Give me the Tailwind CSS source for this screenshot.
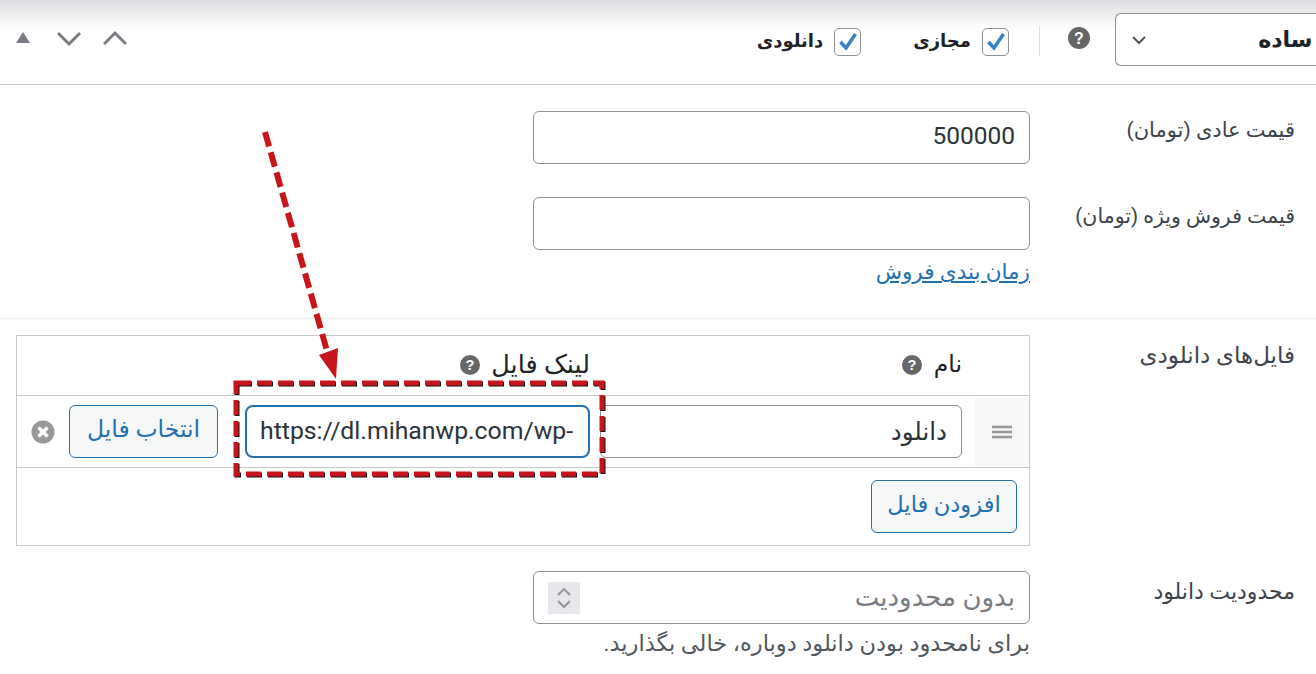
<!doctype html>
<html lang="fa" dir="rtl">
<head>
<meta charset="utf-8">
<title>محصول دانلودی</title>
<script src="https://cdn.jsdelivr.net/npm/@tailwindcss/browser@4"></script>
</head>
<body class="bg-white">
<div class="relative w-[1316px] h-[674px] overflow-hidden bg-white text-[#2c3338] font-['Roboto','DejaVu_Sans',sans-serif]">

  <!-- product type bar -->
  <div class="h-[85px] border-b border-[#c8c8c8] bg-gradient-to-b from-[#dcdde0] via-white via-35% to-white flex items-start">
    <div class="mt-[13px] w-[201px] h-[53px] shrink-0 border border-[#8c8f94] border-r-0 rounded-l-[6px] bg-white flex items-center overflow-hidden justify-between">
      <span class="text-[22px] font-bold text-[#1d2327] whitespace-nowrap mr-[-36px] [word-spacing:-3px]">نوع ساده</span>
      <svg class="ml-[14px] shrink-0" width="18" height="18" viewBox="0 0 18 18"><path d="M3 6l6 6 6-6" fill="none" stroke="#50575e" stroke-width="2"/></svg>
    </div>
    <svg class="mt-[27px] mr-[25px] shrink-0" width="22" height="22" viewBox="0 0 22 22"><circle cx="11" cy="11" r="11" fill="#666"/><text x="11" y="16.5" text-anchor="middle" font-size="16" font-weight="700" fill="#fff" font-family="Liberation Sans">?</text></svg>
    <div class="mt-[26px] mr-[28px] w-px h-[30px] bg-[#dcdcde]"></div>
    <label class="mt-[27px] mr-[30px] flex items-center gap-[11px] text-[18px] font-bold text-[#1d2327]">
      <span class="w-[27px] h-[28px] rounded-[5px] border border-[#8c8f94] bg-white flex items-center justify-center">
        <svg width="22" height="22" viewBox="0 0 22 22"><path d="M3.5 11l5.5 6 9.5-14" fill="none" stroke="#3582c4" stroke-width="3.5"/></svg>
      </span>
      <span class="mb-[3px]">مجازی</span>
    </label>
    <label class="mt-[27px] mr-[52px] flex items-center gap-[11px] text-[18px] font-bold text-[#1d2327]">
      <span class="w-[27px] h-[28px] rounded-[5px] border border-[#8c8f94] bg-white flex items-center justify-center">
        <svg width="22" height="22" viewBox="0 0 22 22"><path d="M3.5 11l5.5 6 9.5-14" fill="none" stroke="#3582c4" stroke-width="3.5"/></svg>
      </span>
      <span class="mb-[3px]">دانلودی</span>
    </label>
    <div class="mr-auto ml-[12px] mt-[26px] flex items-center gap-[22px]" dir="ltr">
      <svg width="23" height="22" viewBox="0 0 23 22"><path d="M4 16L11 5l7 11z" fill="#787c82"/></svg>
      <svg width="24" height="24" viewBox="0 0 24 24"><path d="M1 7l11 11L23 7" fill="none" stroke="#787c82" stroke-width="3"/></svg>
      <svg width="24" height="24" viewBox="0 0 24 24"><path d="M1 18L12 7l11 11" fill="none" stroke="#787c82" stroke-width="3"/></svg>
    </div>
  </div>

  <!-- pricing -->
  <div class="h-[234px] border-b border-[#eeeeee] pt-[26px]">
    <div class="flex h-[53px]">
      <div class="w-[286px] pr-[21px] pt-[4px] text-[21px] text-[#3c434a]">قیمت عادی (تومان)</div>
      <input class="w-[497px] h-[53px] border border-[#8c8f94] rounded-[6px] px-[14px] pb-[4px] text-[24.5px] text-[#2c3338] text-right" dir="ltr" value="500000">
    </div>
    <div class="flex mt-[33px]">
      <div class="w-[286px] pr-[21px] pt-[4px] text-[20.5px] text-[#3c434a]">قیمت فروش ویژه (تومان)</div>
      <div>
        <input class="block w-[497px] h-[53px] border border-[#8c8f94] rounded-[6px]">
        <a class="block mt-[6px] text-[21.5px] underline text-[#2271b1]">زمان بندی فروش</a>
      </div>
    </div>
  </div>

  <!-- downloadable files -->
  <div class="flex pt-[16px]">
    <div class="w-[286px] shrink-0 pr-[21px] pt-[4px] text-[23px] text-[#3c434a]">فایل‌های دانلودی</div>
    <div class="w-[1014px] h-[211px] border border-[#c8c8c8]">
      <div class="h-[60px] border-b border-[#c8c8c8] grid grid-cols-[54px_385px_345px_1fr] items-center text-[#1d2327] pb-[2px]">
        <div></div>
        <div class="pr-[13px] flex items-center gap-[12px] text-[23.5px]">نام
          <svg width="20" height="20" viewBox="0 0 22 22"><circle cx="11" cy="11" r="11" fill="#666"/><text x="11" y="16.5" text-anchor="middle" font-size="16" font-weight="700" fill="#fff" font-family="Liberation Sans">?</text></svg>
        </div>
        <div class="flex items-center gap-[11px] text-[25.5px]">لینک فایل
          <svg width="20" height="20" viewBox="0 0 22 22"><circle cx="11" cy="11" r="11" fill="#666"/><text x="11" y="16.5" text-anchor="middle" font-size="16" font-weight="700" fill="#fff" font-family="Liberation Sans">?</text></svg>
        </div>
      </div>
      <div class="h-[72px] border-b border-[#c8c8c8] flex items-center">
        <div class="w-[54px] h-[70px] bg-[#f7f7f7] flex items-center justify-center shrink-0">
          <svg width="22" height="16" viewBox="0 0 22 16"><path d="M1 3h20M1 8h20M1 13h20" stroke="#999" stroke-width="2.4"/></svg>
        </div>
        <input class="w-[362px] h-[53px] mr-[13px] border border-[#8c8f94] rounded-[6px] px-[14px] text-[24.5px] text-[#2c3338]" value="دانلود">
        <input class="w-[345px] h-[53px] mr-[10px] border-2 border-[#2271b1] rounded-[8px] px-[13px] pb-[3px] text-[24.8px] text-[#2c3338]" dir="ltr" value="https://dl.mihanwp.com/wp-">
        <button class="w-[149px] h-[53px] mr-[27px] border border-[#2271b1] rounded-[6px] bg-[#f6f7f7] text-[#2271b1] text-[23.5px] pb-[3px]">انتخاب فایل</button>
        <svg class="mr-[14px]" width="24" height="24" viewBox="0 0 24 24"><circle cx="12" cy="12" r="11.5" fill="#999"/><path d="M7.5 7.5l9 9M16.5 7.5l-9 9" stroke="#fff" stroke-width="3.6"/></svg>
      </div>
      <div class="pr-[12px] pt-[12px]">
        <button class="w-[146px] h-[53px] border border-[#2271b1] rounded-[6px] bg-[#f6f7f7] text-[#2271b1] text-[22.5px] pb-[3px]">افزودن فایل</button>
      </div>
    </div>
  </div>

  <!-- download limit -->
  <div class="flex pt-[25px]">
    <div class="w-[286px] shrink-0 pr-[21px] pt-[4px] text-[22px] text-[#3c434a]">محدودیت دانلود</div>
    <div>
      <div class="w-[497px] h-[53px] border border-[#8c8f94] rounded-[6px] flex items-center justify-between pr-[14px] pl-[14px]">
        <span class="text-[26px] text-[#787c82]">بدون محدودیت</span>
        <span class="w-[32px] h-[32px] bg-[#e8e8ec] flex items-center justify-center">
          <svg width="16" height="24" viewBox="0 0 16 24"><path d="M2 9l6-6 6 6M2 15l6 6 6-6" fill="none" stroke="#999" stroke-width="2.2"/></svg>
        </span>
      </div>
      <p class="mt-[3px] text-[22.5px] text-[#50575e]">برای نامحدود بودن دانلود دوباره، خالی بگذارید.</p>
    </div>
  </div>

  <!-- red annotation drawn over the form -->
  <svg class="absolute top-0 left-0 pointer-events-none" width="1316" height="674" viewBox="0 0 1316 674" dir="ltr">
    <g fill="none" stroke="#111" stroke-width="5" stroke-dasharray="15 6" transform="translate(1 1)">
      <rect x="236" y="383" width="366" height="91"/>
    </g>
    <g fill="none" stroke="#c8141b" stroke-width="5" stroke-dasharray="15 6">
      <rect x="236" y="383" width="366" height="91"/>
    </g>
    <path d="M265 132L329 358" fill="none" stroke="#c8141b" stroke-width="6" stroke-dasharray="15 6"/>
    <path d="M336 379L319 355L338 348z" fill="#c8141b"/>
  </svg>
</div>
</body>
</html>
